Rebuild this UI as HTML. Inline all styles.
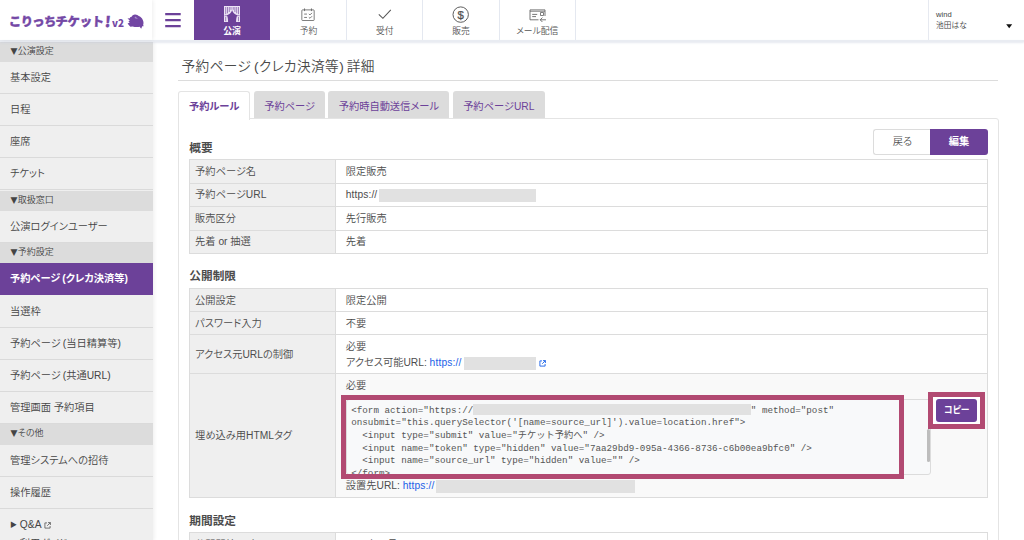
<!DOCTYPE html>
<html lang="ja">
<head>
<meta charset="utf-8">
<title>予約ページ(クレカ決済等)詳細</title>
<style>
*{box-sizing:border-box;margin:0;padding:0}
html,body{width:1024px;height:540px;overflow:hidden;background:#fff}
body{position:relative;font-family:"Liberation Sans","Noto Sans CJK JP",sans-serif;font-size:10.24px;color:#4c4c4c;line-height:1.6;font-feature-settings:"palt";font-weight:350}
.abs{position:absolute}
/* header */
#hd{position:absolute;left:0;top:0;width:1024px;height:40.500px;background:#fff;z-index:5}
#hd:after{content:"";position:absolute;left:0;top:40px;width:1024px;height:2px;background:#e9ecf2;box-shadow:0 1px 2px rgba(200,205,220,.45);z-index:-1}
#logo{position:absolute;left:0;top:0;width:152px;height:40px;box-shadow:1px 0 4px rgba(0,0,0,.07);font-feature-settings:normal}
#logo .t{position:absolute;left:9px;top:12.2px;font-weight:900;font-size:12.4px;line-height:20px;color:#7448a6;white-space:nowrap;letter-spacing:-0.8px;transform:skewX(-2deg);-webkit-text-stroke:.35px #7448a6}
#logo .ex{font-family:"Noto Sans CJK JP",sans-serif;font-size:14.5px;line-height:10px;margin-left:1.2px;display:inline-block;transform:translateY(1.3px) skewX(-3deg);-webkit-text-stroke:.5px #7448a6}
#logo .v{position:absolute;left:112.3px;top:15.6px;font-family:"Noto Sans CJK JP",sans-serif;font-weight:900;font-size:10.6px;line-height:14px;color:#7448a6;transform:scaleX(.93);transform-origin:0 0;letter-spacing:.1px}
.nav{position:absolute;top:0;height:40px;width:76.3px;text-align:center;color:#555}
.nav .lb{position:absolute;left:0;right:0;top:23.9px;font-size:8.8px;line-height:14px;white-space:nowrap}
.nav svg{position:absolute}
.nav.on{background:#6c4199;color:#fff;height:40.400px;width:76px}
.sep{position:absolute;top:0;width:1px;height:40px;background:#e4e8f0}
.nav.on .lb{font-weight:700}
#user{position:absolute;left:928px;top:0;width:96px;height:40px;border-left:1px solid #e6e9f0;color:#444}
/* sidebar */
#sb{position:absolute;left:0;top:41px;width:152.5px;height:500px;background:#efefef;box-shadow:1px 0 4px rgba(0,0,0,.07)}
#sb .sec{position:absolute;left:0;width:152.5px;height:20.5px;background:#dcdcdc;font-size:9px;line-height:19.800px;padding-left:10.600px;color:#444;white-space:nowrap}
#sb .it{position:absolute;left:0;width:152.5px;height:32.2px;border-bottom:1px solid #dadada;font-size:10.24px;line-height:31.6px;padding-left:10px;color:#444;white-space:nowrap}
#sb .it.on{background:#6c4199;color:#fff;font-weight:700;border-bottom:none;height:31.600px}
.tri{font-family:"DejaVu Sans",sans-serif;font-weight:400;font-size:9px;margin-right:.2px;vertical-align:.2px}
.pp.o{margin-left:.2em}
.pp.c{margin-right:.2em}
/* main */
#title{position:absolute;left:181.5px;top:56px;font-size:13.7px;letter-spacing:.36px;line-height:22px;color:#4a4a4a;white-space:nowrap}
#tline{position:absolute;left:178px;top:80px;width:820px;height:1px;background:#dcdcdc}
.tab{position:absolute;top:91px;height:28px;background:#dcdcdc;color:#6c4199;font-weight:400;font-size:10.24px;line-height:31px;text-align:center;border-radius:3px 3px 0 0;white-space:nowrap}
.tab.on{background:#fff;border:1px solid #e4e4e4;border-bottom:none;font-weight:700;z-index:2;height:28.5px;line-height:29px}
#panel{position:absolute;left:178px;top:118px;width:820.5px;height:440px;border:1px solid #e4e4e4;border-radius:0 3px 0 0;background:#fff}
h3{position:absolute;left:189.3px;font-size:11.7px;line-height:18px;font-weight:700;color:#4c4c4c;white-space:nowrap}
.tb{position:absolute;left:188.5px;width:799.5px;border:1px solid #dcdcdc;background:#fff}
.tb .r{position:absolute;left:0;width:797.5px;border-top:1px solid #dcdcdc}
.tb .l{position:absolute;left:0;top:0;bottom:0;width:146.5px;background:#efefef;border-right:1px solid #dcdcdc;padding:1.200px 0 0 5.600px;display:flex;align-items:center;white-space:nowrap}
.tb .v{position:absolute;left:146.5px;top:0;bottom:0;right:0;padding:3.6px 0 0 9.8px;white-space:nowrap;line-height:16.4px}
.gr{display:inline-block;background:#e1e1e1;vertical-align:middle}
a{color:#1a62e8;text-decoration:none;letter-spacing:.14px}
.btn{position:absolute;top:129.3px;height:25.4px;font-size:10.24px;line-height:26.600px;text-align:center}
pre{font-family:"Liberation Mono","Noto Sans CJK JP",monospace;font-size:9.250px;line-height:12.720px;color:#555;font-weight:400;font-feature-settings:normal}
</style>
</head>
<body>

<!-- ===== header ===== -->
<div id="hd">
  <div id="logo">
    <div class="t">こりっち<span style="letter-spacing:-.3px">チケット</span><span class="ex">!</span></div>
    <div class="v">v2</div>
    <svg class="abs" style="left:126.5px;top:13.5px" width="17" height="15" viewBox="0 0 17 15">
      <path fill="#7246a3" d="M.5 4.600L3 4.200L3 3.200L4.400 3C5 1.300 6.600 .3 8.200 .4C9.800 .4 11 1.200 11.700 2.100C13.400 2.600 15 4.200 15.800 6C16.600 7.600 16.700 9.400 16.200 10.800L16.600 12.200L15.200 12.300L14.200 14.700L12.600 12.800C10.400 13.200 7.400 13 5.600 12.400L3.400 12.800L2.200 11.600L.6 9.400L2.800 8.600L1.400 7.400L2.800 6.400Z"/>
      <path fill="#a88ccb" d="M7.600 3.200l1.400 -.7l.5 1.300l1.300 .4l-1 .9l-.7 -.8l-1 .3Z"/>
    </svg>
  </div>
  <svg class="abs" style="left:165.200px;top:12.300px" width="16" height="16" viewBox="0 0 16 16">
    <path stroke="#6c4199" stroke-width="2.2" fill="none" d="M.2 2.100H15.700M.2 8.100H15.700M.2 14.100H15.700"/>
  </svg>

  <div class="nav on" style="left:194px">
    <svg style="left:30.100px;top:6.200px" width="16.200" height="16" viewBox="0 0 16.200 16">
      <path fill="#ece4f5" d="M0 0H16.200V15.900H12.100C12.100 13.400 12.300 11.400 13.300 9.200C11 8.600 8.900 6.800 8.100 4.200C7.300 6.800 5.200 8.600 2.900 9.200C3.900 11.400 4.100 13.400 4.100 15.900H0Z"/>
      <path fill="none" stroke="#6c4199" stroke-width=".75" d="M1.700 1V8.200M3.500 1V7.300M5.300 1V6M7 1V3.800M9.200 1V3.800M10.900 1V6M12.700 1V7.300M14.500 1V8.200M1.700 11V15.200M14.500 11V15.200" opacity=".85"/>
      <path fill="none" stroke="#6c4199" stroke-width=".8" d="M.6 9.700H3.200M13 9.700H15.600" opacity=".8"/>
    </svg>
    <div class="lb">公演</div>
  </div>

  <div class="nav" style="left:270.3px">
    <svg style="left:30.800px;top:7.600px" width="14" height="13.300" viewBox="0 0 15 14" fill="none" stroke="#5c5c5c" stroke-width=".85">
      <rect x=".9" y="1.9" width="13.200" height="11.400" rx=".8"/>
      <path d="M3.800 .3V3.200M11.200 .3V3.200"/>
      <path d="M3.400 6.400H6.400M3.400 10H6.400"/>
      <path d="M8.400 6.200L9.600 7.300L11.800 5.100M8.400 9.800L9.600 10.900L11.800 8.700"/>
    </svg>
    <div class="lb">予約</div>
  </div>

  <div class="nav" style="left:346.6px">
    <svg style="left:31.5px;top:9px" width="14" height="11" viewBox="0 0 14 11" fill="none" stroke="#555" stroke-width="1.05">
      <path d="M.8 5.300L4.900 9.300L12.800 .9"/>
    </svg>
    <div class="lb">受付</div>
  </div>

  <div class="nav" style="left:422.9px">
    <svg style="left:29.6px;top:6px" width="18" height="18" viewBox="0 0 18 18">
      <circle cx="8.700" cy="8.600" r="7.700" fill="none" stroke="#555" stroke-width=".95"/>
      <text x="8.700" y="12.600" font-family="Liberation Sans, sans-serif" font-size="11.400" font-weight="400" fill="#505050" stroke="#505050" stroke-width=".25" text-anchor="middle">$</text>
    </svg>
    <div class="lb">販売</div>
  </div>

  <div class="nav" style="left:499.2px">
    <svg style="left:30px;top:8.500px" width="18" height="14" viewBox="0 0 18 14" fill="none" stroke="#606060" stroke-width=".85">
      <path d="M9.500 10.800H1V.9H16V7"/>
      <path d="M1 2.300H16" stroke-width=".7"/>
      <path d="M3.200 5.400H8.200M3.200 7.600H7"/>
      <rect x="11.600" y="3.600" width="2.800" height="2.800" stroke-width=".8"/>
      <path d="M17 10.800H11.200M13.400 8.600L11.200 10.800L13.400 13"/>
    </svg>
    <div class="lb">メール配信</div>
  </div>

  <div class="sep" style="left:346px"></div><div class="sep" style="left:422px"></div><div class="sep" style="left:499px"></div><div class="sep" style="left:575px"></div>
  <div id="user">
    <div class="abs" style="left:7.100px;top:9.500px;font-size:7.600px;line-height:10px">wind</div>
    <div class="abs" style="left:7.100px;top:20.400px;font-size:7.700px;line-height:12px;white-space:nowrap">池田はな</div>
    <svg class="abs" style="left:77.200px;top:23.600px" width="7" height="5" viewBox="0 0 7 5"><path fill="#111" d="M.2 .2H6.200L3.200 4.300Z"/></svg>
  </div>
</div>

<!-- ===== sidebar ===== -->
<div id="sb">
  <div class="sec" style="top:0.5px"><span class="tri">▼</span>公演設定</div>
  <div class="it" style="top:20.7px">基本設定</div>
  <div class="it" style="top:52.900px">日程</div>
  <div class="it" style="top:85.100px">座席</div>
  <div class="it" style="top:117.300px">チケット</div>
  <div class="sec" style="top:149.500px"><span class="tri">▼</span>取扱窓口</div>
  <div class="it" style="top:170px">公演ログインユーザー</div>
  <div class="sec" style="top:202.200px"><span class="tri">▼</span>予約設定</div>
  <div class="it on" style="top:222.400px">予約ページ<span class="pp o">(</span>クレカ決済等<span class="pp c">)</span></div>
  <div class="it" style="top:254.600px">当選枠</div>
  <div class="it" style="top:286.800px">予約ページ<span class="pp o">(</span>当日精算等<span class="pp c">)</span></div>
  <div class="it" style="top:319px">予約ページ<span class="pp o">(</span>共通URL<span class="pp c">)</span></div>
  <div class="it" style="top:351.200px">管理画面 予約項目</div>
  <div class="sec" style="top:383.400px"><span class="tri">▼</span>その他</div>
  <div class="it" style="top:403.900px">管理システムへの招待</div>
  <div class="it" style="top:436.100px">操作履歴</div>
  <div class="it" style="top:468.300px"><span style="font-size:7px;vertical-align:1px">▶</span> Q&amp;A <svg width="7" height="7" viewBox="0 0 7 7" fill="none" stroke="#555" stroke-width=".8" style="vertical-align:-.5px"><path d="M3 .9H.9V6.100H6.100V4M4 .6H6.400V3M6.400 .6L3.200 3.800"/></svg></div>
  <div class="abs" style="left:10px;top:495.300px;line-height:16px;white-space:nowrap;color:#444"><span style="font-size:7px;vertical-align:1px">▶</span> 利用ガイド</div>
</div>

<!-- ===== main ===== -->
<div id="title">予約ページ<span class="pp o">(</span>クレカ決済等<span class="pp c">)</span>詳細</div>
<div id="tline"></div>

<div class="tab on" style="left:178px;width:72.300px">予約ルール</div>
<div class="tab" style="left:254px;width:71.200px">予約ページ</div>
<div class="tab" style="left:328.200px;width:121.300px">予約時自動送信メール</div>
<div class="tab" style="left:452.500px;width:92.500px">予約ページURL</div>

<div id="panel"></div>

<h3 style="top:139px">概要</h3>
<div class="btn" style="left:873.400px;width:57px;border:1px solid #dcdcdc;border-right:none;border-radius:3px 0 0 3px;background:#fff;color:#555;line-height:24.600px">戻る</div>
<div class="btn" style="left:930.200px;width:57.800px;background:#6c4199;color:#fff;font-weight:700;border-radius:0 3px 3px 0">編集</div>

<div class="tb" style="top:159.400px;height:94.600px">
  <div class="r" style="top:-1px;height:23.400px"><div class="l">予約ページ名</div><div class="v">限定販売</div></div>
  <div class="r" style="top:22.400px;height:23.400px"><div class="l">予約ページURL</div><div class="v"><span style="letter-spacing:.1px">https://</span><span class="gr" style="width:157.500px;height:12.500px;margin-left:1.300px;vertical-align:-3.200px"></span></div></div>
  <div class="r" style="top:45.800px;height:23.400px"><div class="l">販売区分</div><div class="v">先行販売</div></div>
  <div class="r" style="top:69.200px;height:23.400px"><div class="l">先着 or 抽選</div><div class="v">先着</div></div>
</div>

<h3 style="top:266.500px">公開制限</h3>
<div class="tb" style="top:288px;height:210.300px">
  <div class="r" style="top:-1px;height:23.400px"><div class="l">公開設定</div><div class="v">限定公開</div></div>
  <div class="r" style="top:22.200px;height:23.400px"><div class="l">パスワード入力</div><div class="v">不要</div></div>
  <div class="r" style="top:45.400px;height:39.200px"><div class="l">アクセス元URLの制御</div><div class="v">必要<br>アクセス可能URL: <a>https://</a><span class="gr" style="width:72.500px;height:13px;margin-left:2.500px"></span><svg width="7" height="7" viewBox="0 0 7 7" fill="none" stroke="#1a62e8" stroke-width=".9" style="vertical-align:-.5px;margin-left:2.300px"><path d="M3 .9H.9V6.100H6.100V4M4 .6H6.400V3M6.400 .6L3.200 3.800"/></svg></div></div>
  <div class="r" style="top:84.300px;height:124px;background:#f9f9f9"><div class="l">埋め込み用HTMLタグ</div><div class="v">必要</div></div>
</div>

<!-- textarea -->
<div class="abs" style="left:346px;top:399.400px;width:584.500px;height:75.700px;border:1px solid #dcdcdc;border-radius:3px;background:#f8f9fa;overflow:hidden">
<pre class="abs" style="left:4.200px;top:3.500px">&lt;form action="https://<span class="gr" style="width:277.500px;height:11.500px;vertical-align:-3px"></span>" method="post"
onsubmit="this.querySelector('[name=source_url]').value=location.href"&gt;
  &lt;input type="submit" value="チケット予約へ" /&gt;
  &lt;input name="token" type="hidden" value="7aa29bd9-095a-4366-8736-c6b00ea9bfc0" /&gt;
  &lt;input name="source_url" type="hidden" value="" /&gt;
&lt;/form&gt;</pre>
<div class="abs" style="right:-.3px;top:28.500px;width:3px;height:33px;background:#bdbdbd;border-radius:1.500px"></div>
</div>
<!-- highlight boxes -->
<div class="abs" style="left:340.700px;top:395.300px;width:563.500px;height:84px;border:5.200px solid #b24a72"></div>
<div class="abs" style="left:928.300px;top:392.200px;width:57.200px;height:36.800px;border:5.200px solid #b24a72;background:#fff"></div>
<div class="abs" style="left:936.200px;top:399.400px;width:41.200px;height:22.200px;background:#6c4199;border-radius:3px;color:#fff;font-weight:700;font-size:8.800px;line-height:22px;text-align:center">コピー</div>

<div class="abs" style="left:345.800px;top:478.200px;line-height:16.400px;white-space:nowrap">設置先URL: <a>https://</a><span class="gr" style="width:199px;height:13px;margin-left:1.500px"></span></div>

<h3 style="top:511.700px">期間設定</h3>
<div class="tb" style="top:532px;height:40px">
  <div class="r" style="top:-1px;height:23.400px"><div class="l">公開開始日時</div><div class="v">2024年 1月</div></div>
</div>

</body>
</html>
